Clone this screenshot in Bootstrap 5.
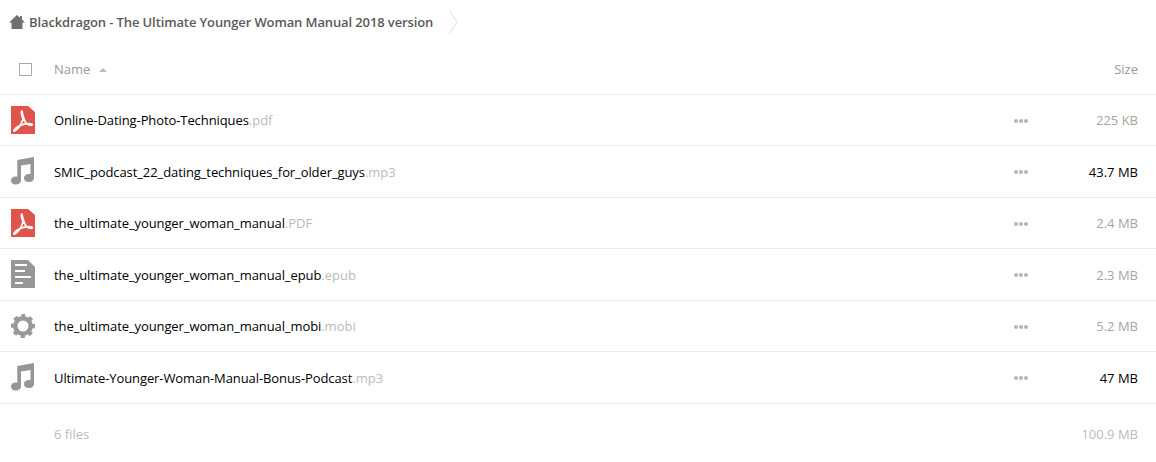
<!DOCTYPE html>
<html lang="en">
<head>
  <meta charset="UTF-8">
  <title>Files</title>
  <link href="https://cdn.jsdelivr.net/npm/bootstrap@5.3.0/dist/css/bootstrap.min.css" rel="stylesheet" />
  <style>
    body { font-family: "Open Sans", sans-serif; font-size: 13px; color: #000; background: #fff; overflow: hidden; }
    .crumbs { height: 44px; padding-left: 9px; }
    .crumb-name { font-weight: 600; color: #5a5a5a; margin-left: 4px; letter-spacing: -0.117px; padding-top: 2px; }
    .crumb-sep { margin-left: 16px; }
    .head-row { height: 50.5px; padding-top: 2px; color: #999; border-bottom: 1px solid #ededed; }
    .check-cell { width: 54px; padding-left: 19px; }
    .fake-check { width: 13px; height: 13px; border: 1px solid #aaa; }
    .sort-up { width: 0; height: 0; margin-left: 9px; border-left: 4px solid transparent; border-right: 4px solid transparent; border-bottom: 4px solid #bbb; }
    .file-row { height: 51.5px; border-bottom: 1px solid #ededed; }
    .icon-cell { width: 54px; padding-left: 11px; }
    .name-cell { padding-top: 2px; }
    .file-base { letter-spacing: -0.09px; }
    .file-ext { color: #bbb; }
    .more-dots { width: 34px; padding-top: 2px; }
    .more-dots i { display: block; width: 4px; height: 4px; border-radius: 50%; background: #b5b5b5; margin-right: 1px; }
    .size-cell { width: 108px; padding-right: 18px; padding-top: 2px; text-align: right; color: #a5a5a5; }
    .head-row .size-cell { padding-top: 0; color: #999; }
    .size-big { color: #000; }
    .foot-row { height: 61px; padding: 2px 18px 0 54px; color: #bbb; }
  </style>
</head>
<body>

  <!-- Breadcrumb -->
  <div class="crumbs d-flex align-items-center">
    <svg width="16" height="14" viewBox="0 0 16 14"><path fill="#707070" d="M8 0 11 2.800V1H13V4.600L16 7.500H13.500V14H2.500V7.500H0Z"/></svg>
    <span class="crumb-name">Blackdragon - The Ultimate Younger Woman Manual 2018 version</span>
    <svg class="crumb-sep" width="9" height="24" viewBox="0 0 9 24"><path fill="none" stroke="#ddd" d="M.5.5 8 12 .5 23.500"/></svg>
  </div>

  <!-- Header -->
  <div class="head-row d-flex align-items-center">
    <div class="check-cell"><div class="fake-check"></div></div>
    <div class="flex-grow-1 d-flex align-items-center">Name <span class="sort-up"></span></div>
    <div class="size-cell text-end">Size</div>
  </div>

  <!-- Files -->
  <div id="fileList"></div>

  <div class="foot-row d-flex align-items-center justify-content-between">
    <span>6 files</span>
    <span>100.9 MB</span>
  </div>

  <script>
    const pdf = `<svg width="24" height="28" viewBox="0 0 24 28"><path fill="#e0544b" d="M0 0H17L24 6V28H0Z"/><path fill="none" stroke="#fff" stroke-width="1.700" stroke-linejoin="round" d="M11 5C9.800 5 10.400 9 12 13C10.600 17.500 7.500 23 3.500 25C1.800 25.500 3.500 22 8.500 19.700C12.500 18 18 17 21 18.200C22.500 19.500 18.500 20 15.500 17.500C13.500 15.500 11.500 8.500 11 5Z"/></svg>`;
    const music = `<svg width="24" height="28" viewBox="0 0 24 28"><path fill="#969696" d="M23 0V21C23 23.500 20.500 25 18 25C15 25 13 23.500 13 21C13 18.500 15.500 17 18 17C18.500 17 19 17 19.500 17.200V7L10 8.600V23.500C10 26 7 27.500 4.500 27.500C2 27.500 0 26 0 23.500C0 21 2.500 19.500 4.500 19.500C5 19.500 5.700 19.600 6.300 19.800V3Z"/></svg>`;
    const doc = `<svg width="24" height="28" viewBox="0 0 24 28"><path fill="#969696" fill-rule="evenodd" d="M0 0H17L24 7V28H0ZM4 4V6H16V4ZM4 10V12H14V10ZM4 16V18H20V16ZM4 22V24H12V22Z"/></svg>`;
    const gear = `<svg width="24" height="24" viewBox="0 0 24 24"><g fill="none" stroke="#999"><circle cx="12" cy="12" r="7.750" stroke-width="4.500"/><circle cx="12" cy="12" r="10.500" stroke-width="3" stroke-dasharray="4.250 4" stroke-dashoffset="2.100" transform="rotate(-90 12 12)"/></g></svg>`;

    const files = [
      { icon: pdf, name: 'Online-Dating-Photo-Techniques', ext: '.pdf', size: '225 KB' },
      { icon: music, name: 'SMIC_podcast_22_dating_techniques_for_older_guys', ext: '.mp3', size: '43.7 MB', big: true },
      { icon: pdf, name: 'the_ultimate_younger_woman_manual', ext: '.PDF', size: '2.4 MB' },
      { icon: doc, name: 'the_ultimate_younger_woman_manual_epub', ext: '.epub', size: '2.3 MB' },
      { icon: gear, name: 'the_ultimate_younger_woman_manual_mobi', ext: '.mobi', size: '5.2 MB' },
      { icon: music, name: 'Ultimate-Younger-Woman-Manual-Bonus-Podcast', ext: '.mp3', size: '47 MB', big: true }
    ];

    const list = document.getElementById('fileList');
    files.forEach(f => {
      list.innerHTML += `
        <div class="file-row d-flex align-items-center">
          <div class="icon-cell d-flex align-items-center">${f.icon}</div>
          <div class="name-cell flex-grow-1"><span class="file-base">${f.name}</span><span class="file-ext">${f.ext}</span></div>
          <div class="more-dots d-flex align-items-center"><i></i><i></i><i></i></div>
          <div class="size-cell ${f.big ? 'size-big' : ''}">${f.size}</div>
        </div>`;
    });
  </script>

  <script src="https://cdn.jsdelivr.net/npm/bootstrap@5.3.0/dist/js/bootstrap.bundle.min.js"></script>
</body>
</html>
